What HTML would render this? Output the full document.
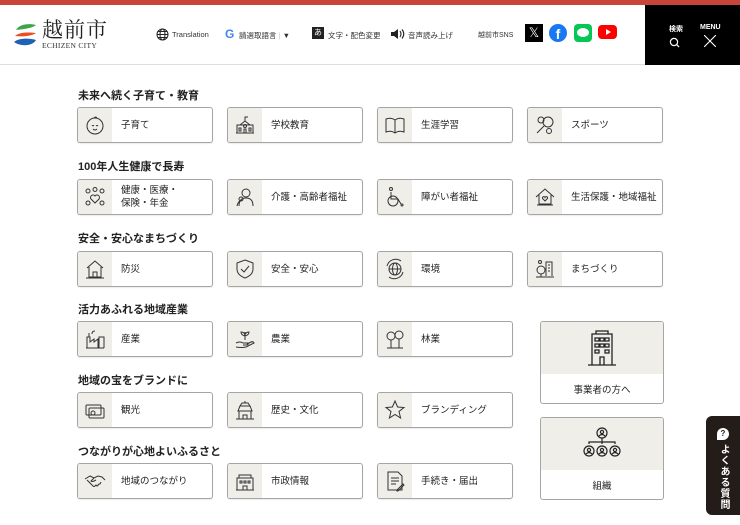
<!DOCTYPE html>
<html><head><meta charset="utf-8"><style>
*{margin:0;padding:0;box-sizing:border-box}
body{width:740px;height:525px;overflow:hidden;background:#fff;font-family:"Liberation Sans","Noto Sans CJK JP",sans-serif;color:#222;position:relative}
.a{position:absolute}
.top{left:0;top:0;width:740px;height:5px;background:#c8453a}
.hd{left:0;top:5px;width:740px;height:60px;border-bottom:1px solid #ddd}
.blk{left:645px;top:5px;width:95px;height:60px;background:#000;color:#fff;font-size:7px;font-weight:bold}
.nav{font-size:7.5px;color:#333;white-space:nowrap}
.h2{font-size:11px;font-weight:bold;color:#222;left:78px}
.card{width:136px;height:36px;border:1px solid #a5a5a5;border-radius:3px;background:#fff;overflow:hidden;box-shadow:0 1px 1px rgba(0,0,0,.08)}
.card .ic{position:absolute;left:0;top:0;width:34px;height:100%;background:#f0eee9;display:flex;align-items:center;justify-content:center}
.card .t{position:absolute;left:43px;top:0;height:100%;display:flex;align-items:center;font-size:9.5px;line-height:13px;color:#222;white-space:nowrap}
.big{width:124px;height:83px;border:1px solid #a5a5a5;border-radius:3px;overflow:hidden;background:#fff}
.big .ib{position:absolute;left:0;top:0;width:100%;height:52px;background:#f0eee9;display:flex;align-items:center;justify-content:center}
.big .t{position:absolute;left:0;top:52px;width:100%;height:30px;display:flex;align-items:center;justify-content:center;font-size:9.5px}
svg{display:block}
</style></head><body>
<div class="a top"></div>
<div class="a hd"></div>
<svg class="a" style="left:13px;top:22px" width="25" height="26" viewBox="0 0 25 26">
<path d="M3 8 C6 2 16 1 23 3 C20 6 12 7 3 8Z" fill="#3aa648"/>
<path d="M2 14 C6 10 16 10 23 11 C19 14 10 15 2 14Z" fill="#e8501f"/>
<path d="M1 20 C6 16 16 16 23 18 C20 24 8 25 1 20Z" fill="#1f62b5"/>
</svg>
<div class="a" style="left:42px;top:17px;font-size:21px;font-family:'Noto Serif CJK SC','Liberation Serif',serif;letter-spacing:1px;color:#222;line-height:24px">越前市</div>
<div class="a" style="left:42px;top:41px;font-size:7.5px;font-family:'Liberation Serif',serif;color:#333;letter-spacing:.3px">ECHIZEN CITY</div>
<svg class="a" style="left:156px;top:28px" width="13" height="13" viewBox="0 0 13 13" fill="none" stroke="#222" stroke-width="1"><circle cx="6.5" cy="6.5" r="5.5"/><ellipse cx="6.5" cy="6.5" rx="2.5" ry="5.5"/><path d="M1 6.5h11M2 3.5h9M2 9.5h9"/></svg>
<div class="a nav" style="left:172px;top:30px">Translation</div>
<div class="a" style="left:225px;top:27px;font-size:12px;font-weight:bold;color:#4285f4">G</div>
<div class="a nav" style="left:239px;top:30px">請選取語言 <span style="color:#ccc">|</span> ▼</div>
<div class="a" style="left:312px;top:27px;width:12px;height:12px;background:#222;color:#fff;font-size:8px;text-align:center;line-height:12px">あ</div>
<div class="a nav" style="left:328px;top:30px">文字・配色変更</div>
<svg class="a" style="left:390px;top:28px" width="16" height="12" viewBox="0 0 16 12"><path d="M1 4h3l4-3v10l-4-3H1z" fill="#222"/><path d="M10 3q2 3 0 6M12 1.5q3.5 4.5 0 9" fill="none" stroke="#222" stroke-width="1.1"/></svg>
<div class="a nav" style="left:408px;top:30px">音声読み上げ</div>
<div class="a nav" style="left:478px;top:30px;font-size:7px">越前市SNS</div>
<div class="a" style="left:525px;top:24px;width:18px;height:18px;background:#000;color:#fff;font-size:13px;text-align:center;line-height:18px">𝕏</div>
<div class="a" style="left:549px;top:24px;width:18px;height:18px;border-radius:50%;background:#1877f2;color:#fff;font-size:14px;font-weight:bold;text-align:center;line-height:21px">f</div>
<div class="a" style="left:574px;top:24px;width:18px;height:18px;border-radius:4px;background:#06c755"><div style="position:absolute;left:3px;top:4px;width:12px;height:9px;background:#fff;border-radius:50%"></div></div>
<div class="a" style="left:598px;top:25px;width:19px;height:14px;border-radius:4px;background:#f00"><div style="position:absolute;left:8px;top:4px;border-left:5px solid #fff;border-top:3px solid transparent;border-bottom:3px solid transparent"></div></div>
<div class="a blk">
<div class="a" style="left:24px;top:19px">検索</div>
<div class="a" style="left:55px;top:19px">MENU</div>
<svg class="a" style="left:24px;top:32px" width="11" height="11" viewBox="0 0 11 11" fill="none" stroke="#fff" stroke-width="1.2"><circle cx="5" cy="5" r="3.6"/><path d="M7.6 7.6l2.5 2.5"/></svg>
<svg class="a" style="left:59px;top:30px" width="12" height="12" viewBox="0 0 12 12" stroke="#fff" stroke-width="1.1"><path d="M0 0l12 12M12 0L0 12"/></svg>
</div>

<div class="a h2" style="top:87px">未来へ続く子育て・教育</div>
<div class="a h2" style="top:158px">100年人生健康で長寿</div>
<div class="a h2" style="top:230px">安全・安心なまちづくり</div>
<div class="a h2" style="top:301px">活力あふれる地域産業</div>
<div class="a h2" style="top:372px">地域の宝をブランドに</div>
<div class="a h2" style="top:443px">つながりが心地よいふるさと</div>

<div class="a card" style="left:77px;top:107px"><div class="ic"><svg width="22" height="22" viewBox="0 0 22 22" fill="none" stroke="#333" stroke-width="1"><circle cx="11" cy="12" r="8"/><path d="M8 12q1-1 2 0M12 12q1-1 2 0M9 15q2 2 4 0M10 4q2-2 3 0"/></svg></div><div class="t">子育て</div></div>
<div class="a card" style="left:227px;top:107px"><div class="ic"><svg width="22" height="22" viewBox="0 0 22 22" fill="none" stroke="#333" stroke-width="1"><path d="M2 19h18M3 19V11h16v8M6 11l5-4 5 4M11 7V3h3"/><circle cx="11" cy="12" r="1.5"/><path d="M5 14h2v3H5zM15 14h2v3h-2zM10 15h2v4h-2z"/></svg></div><div class="t">学校教育</div></div>
<div class="a card" style="left:377px;top:107px"><div class="ic"><svg width="22" height="22" viewBox="0 0 22 22" fill="none" stroke="#333" stroke-width="1"><path d="M2 5q5-2 9 1q4-3 9-1v13q-5-2-9 1q-4-3-9-1zM11 6v13"/></svg></div><div class="t">生涯学習</div></div>
<div class="a card" style="left:527px;top:107px"><div class="ic"><svg width="22" height="22" viewBox="0 0 22 22" fill="none" stroke="#333" stroke-width="1"><circle cx="14" cy="8" r="5"/><path d="M10 12l-7 7"/><circle cx="7" cy="6" r="3"/><circle cx="15" cy="17" r="2.5"/></svg></div><div class="t">スポーツ</div></div>

<div class="a card" style="left:77px;top:179px"><div class="ic"><svg width="22" height="22" viewBox="0 0 22 22" fill="none" stroke="#333" stroke-width="1"><path d="M11 17l-4-4a2.5 2.5 0 0 1 4-3a2.5 2.5 0 0 1 4 3z"/><circle cx="4" cy="5" r="2"/><circle cx="11" cy="3.5" r="2"/><circle cx="18" cy="5" r="2"/><circle cx="4" cy="17" r="2"/><circle cx="18" cy="17" r="2"/></svg></div><div class="t">健康・医療・<br>保険・年金</div></div>
<div class="a card" style="left:227px;top:179px"><div class="ic"><svg width="22" height="22" viewBox="0 0 22 22" fill="none" stroke="#333" stroke-width="1"><circle cx="12" cy="7" r="4"/><path d="M5 20q0-8 7-8q7 0 7 8M3 20q1-5 5-6"/><circle cx="7" cy="13" r="2"/></svg></div><div class="t">介護・高齢者福祉</div></div>
<div class="a card" style="left:377px;top:179px"><div class="ic"><svg width="22" height="22" viewBox="0 0 22 22" fill="none" stroke="#333" stroke-width="1"><circle cx="7" cy="3" r="1.5"/><path d="M7 6v7h7l3 5"/><circle cx="9" cy="15" r="5"/><circle cx="18" cy="19" r="1"/></svg></div><div class="t">障がい者福祉</div></div>
<div class="a card" style="left:527px;top:179px"><div class="ic"><svg width="22" height="22" viewBox="0 0 22 22" fill="none" stroke="#333" stroke-width="1"><path d="M2 11l9-8 9 8M5 9v9h12V9M3 19h16"/><path d="M11 15l-2.5-2.5a1.3 1.3 0 0 1 2.5-1a1.3 1.3 0 0 1 2.5 1z"/></svg></div><div class="t">生活保護・地域福祉</div></div>

<div class="a card" style="left:77px;top:251px"><div class="ic"><svg width="22" height="22" viewBox="0 0 22 22" fill="none" stroke="#333" stroke-width="1"><path d="M3 10l8-7 8 7M5 9v10h12V9M9 19v-5h4v5M2 20h18"/></svg></div><div class="t">防災</div></div>
<div class="a card" style="left:227px;top:251px"><div class="ic"><svg width="22" height="22" viewBox="0 0 22 22" fill="none" stroke="#333" stroke-width="1"><path d="M11 2l8 3v6q0 6-8 9q-8-3-8-9V5z"/><path d="M7 11l3 3 5-6"/></svg></div><div class="t">安全・安心</div></div>
<div class="a card" style="left:377px;top:251px"><div class="ic"><svg width="22" height="22" viewBox="0 0 22 22" fill="none" stroke="#333" stroke-width="1"><circle cx="11" cy="11" r="6"/><ellipse cx="11" cy="11" rx="2.5" ry="6"/><path d="M5 11h12"/><path d="M3 8a9 9 0 0 1 14-5M19 14a9 9 0 0 1-14 5"/></svg></div><div class="t">環境</div></div>
<div class="a card" style="left:527px;top:251px"><div class="ic"><svg width="22" height="22" viewBox="0 0 22 22" fill="none" stroke="#333" stroke-width="1"><path d="M12 18V4h6v14M14 7h2M14 10h2M14 13h2"/><circle cx="7" cy="12" r="4"/><path d="M7 16v3M2 19h18"/><circle cx="6" cy="4" r="1.5"/></svg></div><div class="t">まちづくり</div></div>

<div class="a card" style="left:77px;top:321px"><div class="ic"><svg width="22" height="22" viewBox="0 0 22 22" fill="none" stroke="#333" stroke-width="1"><path d="M2 20h18M3 20V9h3v5l4-3v3l4-3v9M15 20V9h5v11M5 9V5M8 6q0-3 3-3"/></svg></div><div class="t">産業</div></div>
<div class="a card" style="left:227px;top:321px"><div class="ic"><svg width="22" height="22" viewBox="0 0 22 22" fill="none" stroke="#333" stroke-width="1"><path d="M2 15q4-2 7 0h5q1 2-2 2h-3M2 19q6 1 10 0l8-4q-1-2-3-1l-4 2"/><path d="M11 12V4M11 8q-4-1-4-4q4 0 4 4M11 8q4-1 4-4q-4 0-4 4"/></svg></div><div class="t">農業</div></div>
<div class="a card" style="left:377px;top:321px"><div class="ic"><svg width="22" height="22" viewBox="0 0 22 22" fill="none" stroke="#333" stroke-width="1"><circle cx="7" cy="8" r="4"/><circle cx="15" cy="7" r="4"/><path d="M7 12v8M15 11v9M3 20h16"/></svg></div><div class="t">林業</div></div>

<div class="a card" style="left:77px;top:392px"><div class="ic"><svg width="22" height="22" viewBox="0 0 22 22" fill="none" stroke="#333" stroke-width="1"><rect x="2" y="6" width="15" height="10" rx="1"/><rect x="5" y="9" width="15" height="10" rx="1"/><circle cx="9" cy="14" r="2"/></svg></div><div class="t">観光</div></div>
<div class="a card" style="left:227px;top:392px"><div class="ic"><svg width="22" height="22" viewBox="0 0 22 22" fill="none" stroke="#333" stroke-width="1"><path d="M11 2v2M6 7h10l-2-3H8zM4 12h14l-2-5H6zM5 12v8h12v-8M2 20h18M9 20v-4h4v4"/></svg></div><div class="t">歴史・文化</div></div>
<div class="a card" style="left:377px;top:392px"><div class="ic"><svg width="22" height="22" viewBox="0 0 22 22" fill="none" stroke="#333" stroke-width="1"><path d="M11 2l2.6 6 6.4.5-5 4 1.6 6.5-5.6-3.5-5.6 3.5 1.6-6.5-5-4 6.4-.5z"/></svg></div><div class="t">ブランディング</div></div>

<div class="a card" style="left:77px;top:463px"><div class="ic"><svg width="22" height="22" viewBox="0 0 22 22" fill="none" stroke="#333" stroke-width="1"><path d="M1 9l5-3 4 2 4-2 4 1 3 3M3 10l6 6q1 1 2 0l1-1 1 1q1 0 1-1l1-1 1 0 1-2M10 8l-3 3q1 1 3 0l2-1"/></svg></div><div class="t">地域のつながり</div></div>
<div class="a card" style="left:227px;top:463px"><div class="ic"><svg width="22" height="22" viewBox="0 0 22 22" fill="none" stroke="#333" stroke-width="1"><path d="M3 20V8h16v12M2 20h18M5 8V5h12v3M6 11h2v2H6zM10 11h2v2h-2zM14 11h2v2h-2zM9 20v-4h4v4"/></svg></div><div class="t">市政情報</div></div>
<div class="a card" style="left:377px;top:463px"><div class="ic"><svg width="22" height="22" viewBox="0 0 22 22" fill="none" stroke="#333" stroke-width="1"><path d="M4 2h10l4 4v14H4zM7 8h8M7 11h8M7 14h5"/><path d="M13 20l6-6 1 1-6 6h-1z"/></svg></div><div class="t">手続き・届出</div></div>

<div class="a big" style="left:540px;top:321px"><div class="ib"><svg width="34" height="38" viewBox="0 0 34 38" fill="none" stroke="#222" stroke-width="1.3"><path d="M7 36V5h20v31M11 5V2h12v3M3 36h28"/><path d="M10 9h4v3h-4zM15 9h4v3h-4zM20 9h4v3h-4zM10 15h4v3h-4zM15 15h4v3h-4zM20 15h4v3h-4zM10 21h4v3h-4zM20 21h4v3h-4zM15 36v-8h4v8"/></svg></div><div class="t">事業者の方へ</div></div>
<div class="a big" style="left:540px;top:417px"><div class="ib"><svg width="42" height="36" viewBox="0 0 42 36" fill="none" stroke="#222" stroke-width="1.2"><circle cx="21" cy="7" r="5"/><circle cx="21" cy="6" r="1.6"/><path d="M18 10q3-3 6 0M21 12v6M8 18V16h26v2"/><circle cx="8" cy="25" r="5"/><circle cx="21" cy="25" r="5"/><circle cx="34" cy="25" r="5"/><circle cx="8" cy="24" r="1.6"/><circle cx="21" cy="24" r="1.6"/><circle cx="34" cy="24" r="1.6"/><path d="M5 28q3-3 6 0M18 28q3-3 6 0M31 28q3-3 6 0"/></svg></div><div class="t">組織</div></div>

<div class="a" style="left:706px;top:416px;width:40px;height:99px;background:#231c19;border-radius:6px 0 0 6px;color:#fff">
<div class="a" style="left:11px;top:12px;width:12px;height:12px;border-radius:50% 50% 50% 0;background:#fff;color:#231c19;font-size:8px;font-weight:bold;text-align:center;line-height:12px">?</div>
<div class="a" style="left:10px;top:28px;writing-mode:vertical-rl;font-size:10px;font-weight:bold;letter-spacing:1px">よくある質問</div>
</div>
</body></html>
